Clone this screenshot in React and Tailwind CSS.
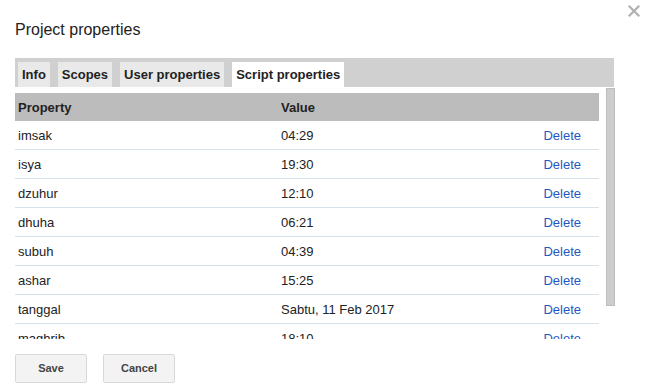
import React from 'react';

const rows = [
  ['imsak', '04:29'],
  ['isya', '19:30'],
  ['dzuhur', '12:10'],
  ['dhuha', '06:21'],
  ['subuh', '04:39'],
  ['ashar', '15:25'],
  ['tanggal', 'Sabtu, 11 Feb 2017'],
  ['maghrib', '18:10'],
];

const tabs = ['Info', 'Scopes', 'User properties', 'Script properties'];

export default function App() {
  return (
    <div className="relative w-[648px] h-[392px] bg-white text-[#222] font-['Liberation_Sans',Arial,sans-serif] pl-[15px] pt-[20px] overflow-hidden">
      {/* close */}
      <button type="button" className="absolute right-[7px] top-[4px] w-[14px] h-[14px] flex items-center justify-center">
        <svg width="12" height="12" viewBox="0 0 12 12">
          <path d="M1.5 1.5 L10.5 10.5 M10.5 1.5 L1.5 10.5" stroke="#b0b0b0" strokeWidth="2.2" strokeLinecap="square" />
        </svg>
      </button>

      <h1 className="text-[16px] leading-[20px] font-normal">Project properties</h1>

      {/* tabs */}
      <div className="mt-[18px] w-[599px] h-[29px] bg-[#d0d0d0] flex items-end gap-2 pl-[3px]">
        {tabs.map((t) => (
          <div
            key={t}
            className={`h-[25px] px-[4px] flex items-center text-[13px] font-bold ${t === 'Script properties' ? 'bg-white' : 'bg-[#e9e9e9]'}`}
          >
            {t}
          </div>
        ))}
      </div>

      {/* table + scrollbar */}
      <div className="flex h-[252px]">
        <div className="w-[584px] pt-[6px] overflow-hidden text-[13px]">
          <div className="flex items-center h-[28px] pt-[1px] bg-[#bcbcbc] font-bold">
            <div className="w-[266px] pl-[3px]">Property</div>
            <div className="flex-1">Value</div>
          </div>
          {rows.map(([k, v]) => (
            <div key={k} className="flex items-center h-[29px] pt-[2px] border-b border-[#d6e1ea]">
              <div className="w-[266px] pl-[3px]">{k}</div>
              <div className="flex-1">{v}</div>
              <a className="pr-[18px] text-[#1f58c0] cursor-pointer">Delete</a>
            </div>
          ))}
        </div>
        <div className="ml-[7px] pt-[1px]">
          <div className="w-[9px] h-[218px] bg-[#cdcdcd] border border-[#bdbdbd]" />
        </div>
      </div>

      {/* buttons */}
      <div className="mt-[15px] flex gap-4">
        <button type="button" className="w-[72px] h-[29px] bg-[#f3f3f3] border border-[#d9d9d9] rounded-[2px] text-[11px] font-bold text-[#444]">
          Save
        </button>
        <button type="button" className="w-[72px] h-[29px] bg-[#f3f3f3] border border-[#d9d9d9] rounded-[2px] text-[11px] font-bold text-[#444]">
          Cancel
        </button>
      </div>
    </div>
  );
}
